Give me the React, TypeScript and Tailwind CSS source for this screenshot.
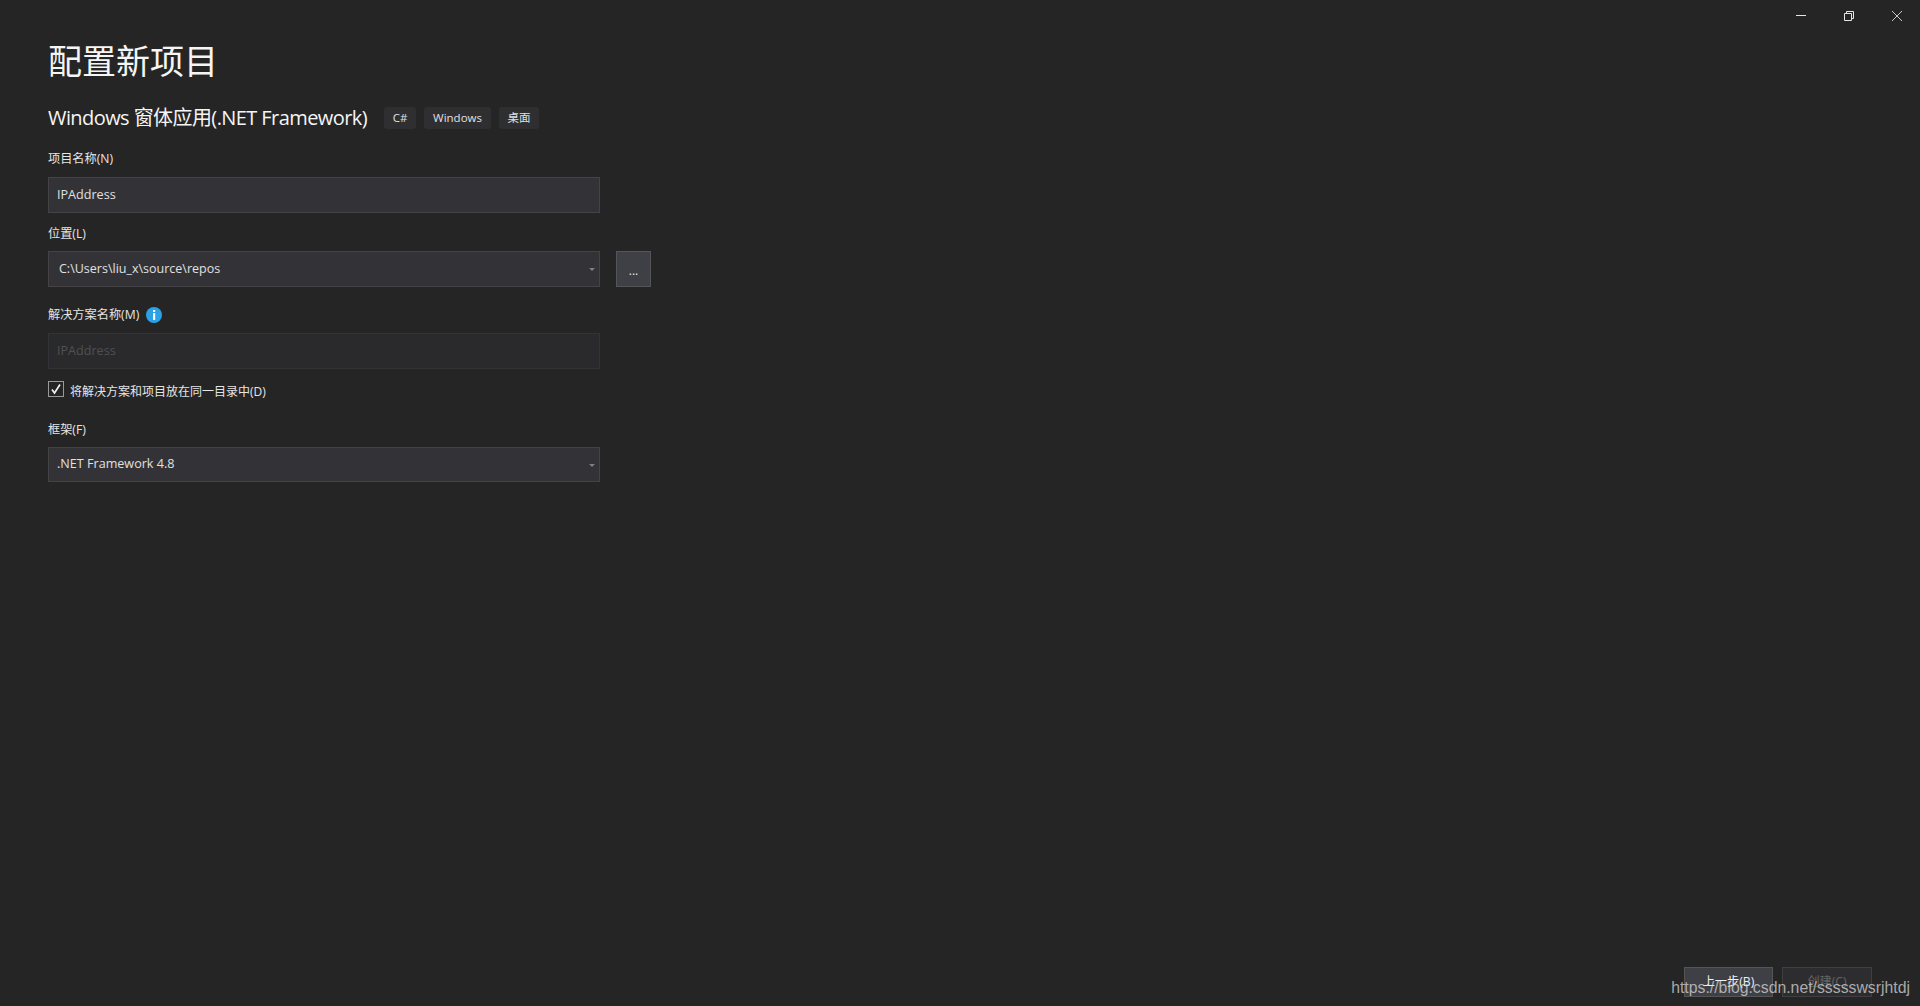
import React from "react";

const font = "font-['Open_Sans','Noto_Sans_CJK_SC',sans-serif]";

function Caret() {
  return (
    <svg width="6" height="3" viewBox="0 0 6 3" className="absolute right-[4px] top-[16px]">
      <path d="M0 0H6L3 3Z" fill="#7f7f84" />
    </svg>
  );
}

function Tag({ children, w }: { children: React.ReactNode; w: string }) {
  return (
    <span className={`flex h-[22px] items-center justify-center rounded-[3px] bg-[#2f2f31] text-[11.5px] text-[#e0e0e0] ${w}`}>
      {children}
    </span>
  );
}

export default function App() {
  return (
    <div className={`relative flex h-[1006px] w-full flex-col overflow-hidden bg-[#252526] text-[#f1f1f1] ${font}`}>
      <div className="flex h-[30px] justify-end pr-[18px]">
        <div className="flex items-start gap-[38px] pt-[11px]">
          <svg width="10" height="10" viewBox="0 0 10 10"><path d="M0 4.5H10" stroke="#e6e6e6" fill="none" /></svg>
          <svg width="10" height="10" viewBox="0 0 10 10"><path d="M.5 2.5H7.5V9.5H.5ZM2.5 2.5V.5H9.5V7.5H7.5" stroke="#e6e6e6" fill="none" /></svg>
          <svg width="10" height="10" viewBox="0 0 10 10"><path d="M0 0L10 10M10 0L0 10" stroke="#c8c8c8" fill="none" /></svg>
        </div>
      </div>

      <div className="pl-[48px]">
        <h1 className="mt-[10px] h-[42px] text-[34px] leading-[42px] font-normal text-[#f5f5f5]">配置新项目</h1>
        <div className="mt-[25px] flex h-[22px] items-center">
          <h2 className="w-[336px] text-[20px] leading-[22px] font-normal tracking-[-0.58px] whitespace-nowrap text-[#f5f5f5]">Windows 窗体应用(.NET Framework)</h2>
          <div className="flex gap-[8px]">
            <Tag w="w-[32px]">C#</Tag>
            <Tag w="w-[67px]">Windows</Tag>
            <Tag w="w-[40px]">桌面</Tag>
          </div>
        </div>

        <label className="mt-[21px] block h-[18px] text-[12.2px] leading-[18px] text-[#e6e6e6]">项目名称(N)</label>
        <div className="mt-[9px] flex h-[36px] w-[552px] items-center border border-[#434346] bg-[#333337] pl-[8px] text-[12.6px] text-[#e0e0e0]">IPAddress</div>

        <label className="mt-[12px] block h-[18px] text-[12.2px] leading-[18px] text-[#e6e6e6]">位置(L)</label>
        <div className="mt-[8px] flex items-center gap-[16px]">
          <div className="relative flex h-[36px] w-[552px] items-center border border-[#434346] bg-[#333337] pl-[10px] text-[12.5px] text-[#e0e0e0]">
            C:\Users\liu_x\source\repos
            <Caret />
          </div>
          <div className="flex h-[36px] w-[35px] items-center justify-center border border-[#555558] bg-[#3f3f46] pt-[4px] text-[12px] text-[#e6e6e6]">...</div>
        </div>

        <div className="mt-[19px] flex h-[18px] items-center gap-[7px] text-[12.2px] text-[#e6e6e6]">
          <span>解决方案名称(M)</span>
          <svg width="16" height="16" viewBox="0 0 16 16">
            <circle cx="8" cy="8" r="8" fill="#2ba1e6" />
            <rect x="7" y="3" width="2.2" height="2" fill="#fff" />
            <rect x="7" y="6" width="2.2" height="7" fill="#fff" />
          </svg>
        </div>
        <div className="mt-[9px] flex h-[36px] w-[552px] items-center border border-[#333337] bg-[#2a2a2c] pl-[8px] text-[12.6px] text-[#505052]">IPAddress</div>

        <div className="mt-[12px] flex h-[16px] items-start">
          <span className="flex h-[16px] w-[16px] items-center justify-center border border-[#999999] bg-[#252526]">
            <svg width="12" height="12" viewBox="0 0 12 12"><path d="M2 6.5L4.5 10L10 1.5" stroke="#f1f1f1" strokeWidth="1.7" fill="none" /></svg>
          </span>
          <span className="ml-[6px] mt-[2px] text-[12px] leading-[18px] whitespace-nowrap text-[#e6e6e6]">将解决方案和项目放在同一目录中(D)</span>
        </div>

        <label className="mt-[24px] block h-[18px] text-[12.2px] leading-[18px] text-[#e6e6e6]">框架(F)</label>
        <div className="relative mt-[8px] flex h-[35px] w-[552px] items-center border border-[#434346] bg-[#333337] pl-[8px] text-[12.6px] text-[#e0e0e0]">
          .NET Framework 4.8
          <Caret />
        </div>
      </div>

      <div className="mt-auto mb-[9px] flex justify-end gap-[9px] pr-[48px]">
        <div className="flex h-[30px] w-[89px] items-center justify-center border border-[#555558] bg-[#3f3f46] text-[12.2px] text-[#f1f1f1]">上一步(B)</div>
        <div className="flex h-[30px] w-[90px] items-center justify-center border border-[#3f3f42] bg-[#2d2d30] text-[12.2px] text-[#656565]">创建(C)</div>
      </div>

      <div className="absolute top-[978px] right-[10px] font-['Liberation_Sans',sans-serif] text-[15.8px] leading-[20px] whitespace-nowrap text-[#d8d8d8]/75">
        https://blog.csdn.net/ssssswsrjhtdj
      </div>
    </div>
  );
}
